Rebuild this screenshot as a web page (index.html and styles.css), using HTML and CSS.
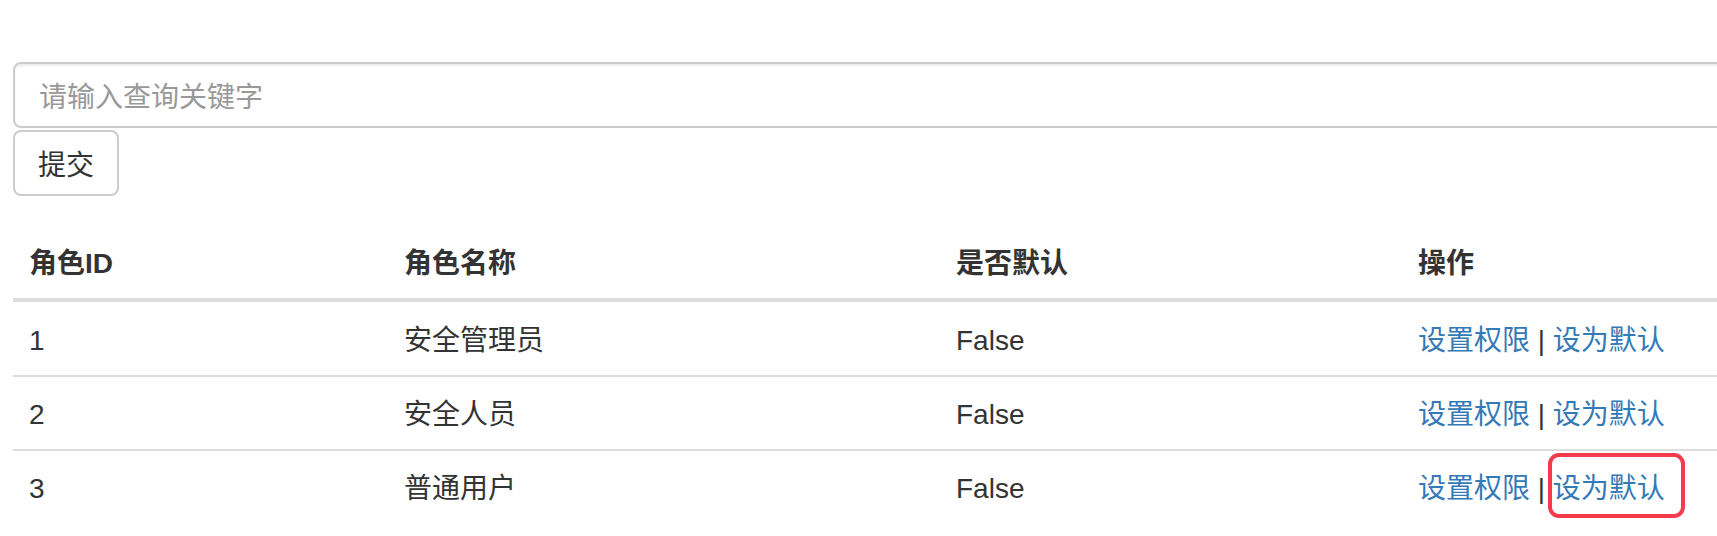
FILE: index.html
```html
<!DOCTYPE html>
<html lang="zh-CN">
<head>
<meta charset="utf-8">
<title>角色管理</title>
<link rel="stylesheet" href="styles.css">
</head>
<body>
<div class="page">
  <form class="search">
    <input class="field" type="text" placeholder="请输入查询关键字">
    <button class="btn" type="button">提交</button>
  </form>
  <table class="roles">
    <colgroup>
      <col class="c-id">
      <col class="c-name">
      <col class="c-def">
      <col class="c-op">
    </colgroup>
    <thead>
      <tr><th>角色ID</th><th>角色名称</th><th>是否默认</th><th>操作</th></tr>
    </thead>
    <tbody>
      <tr>
        <td>1</td><td>安全管理员</td><td>False</td>
        <td><a class="link" href="#">设置权限</a> | <a class="link" href="#">设为默认</a></td>
      </tr>
      <tr>
        <td>2</td><td>安全人员</td><td>False</td>
        <td><a class="link" href="#">设置权限</a> | <a class="link" href="#">设为默认</a></td>
      </tr>
      <tr>
        <td>3</td><td>普通用户</td><td>False</td>
        <td><a class="link" href="#">设置权限</a> | <span class="marked"><a class="link" href="#">设为默认</a></span></td>
      </tr>
    </tbody>
  </table>
</div>
</body>
</html>
```
FILE: styles.css
```css
html, body {
  margin: 0;
  padding: 0;
  overflow: hidden;
  background: #fff;
}
body {
  font-family: "Liberation Sans", "Noto Sans CJK SC", sans-serif;
  font-size: 28px;
  line-height: 40px;
  color: #333;
}
.page {
  width: 1760px;
  padding: 62px 0 0 13px;
}
.search {
  display: flex;
  flex-direction: column;
  align-items: flex-start;
  gap: 2px;
  margin: 0;
}
.field {
  box-sizing: border-box;
  width: 100%;
  height: 66px;
  padding: 5px 24px 0;
  border: 2px solid #ccc;
  border-radius: 8px;
  font: inherit;
  color: #555;
  background: #fff;
  box-shadow: inset 0 2px 2px rgba(0, 0, 0, 0.075);
  outline: none;
}
.field::placeholder {
  color: #999;
}
.btn {
  box-sizing: border-box;
  height: 66px;
  padding: 5px 23px 0;
  border: 2px solid #ccc;
  border-radius: 8px;
  background: #fff;
  font: inherit;
  color: #333;
}
.roles {
  width: 100%;
  margin-top: 30px;
  border-collapse: separate;
  border-spacing: 0;
  table-layout: fixed;
}
.c-id { width: 375px; }
.c-name { width: 552px; }
.c-def { width: 462px; }
.roles th,
.roles td {
  padding: 18px 16px 14px;
  text-align: left;
  vertical-align: top;
  line-height: 40px;
}
.roles th {
  font-weight: bold;
  border-bottom: 4px solid #ddd;
}
.roles td {
  border-top: 2px solid #ddd;
}
.roles tbody tr:first-child td {
  border-top: 1px solid transparent;
}
.link {
  color: #337ab7;
  text-decoration: none;
}
.marked {
  position: relative;
  display: inline-block;
}
.marked::after {
  content: "";
  position: absolute;
  left: -5px;
  right: -20px;
  top: -16px;
  bottom: -9px;
  border: 4px solid #f53a4b;
  border-radius: 11px;
  pointer-events: none;
}
```
